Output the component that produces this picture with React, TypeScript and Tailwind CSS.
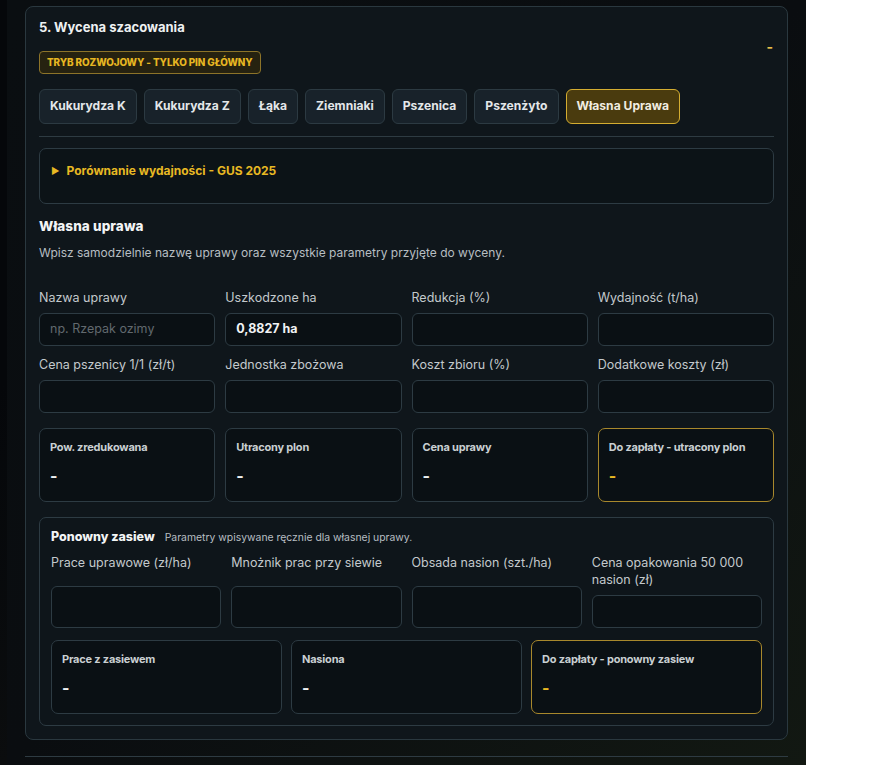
import React from 'react';

const crops = ['Kukurydza K', 'Kukurydza Z', 'Łąka', 'Ziemniaki', 'Pszenica', 'Pszenżyto', 'Własna Uprawa'];

const Field: React.FC<{ label: string; value?: string; placeholder?: string }> = ({ label, value, placeholder }) => (
  <div className="flex flex-col">
    <label className="text-[12.5px] leading-[17px] text-[#c3c9cc] mb-[7px]">{label}</label>
    <div className="h-[33px] rounded-[6px] border border-[#2d3b43] bg-[#0a1014] px-[10px] flex items-center text-[12.5px]">
      {value ? (
        <span className="font-bold text-[#f1f3f4]">{value}</span>
      ) : (
        <span className="text-[#61696e]">{placeholder}</span>
      )}
    </div>
  </div>
);

const Stat: React.FC<{ label: string; accent?: boolean }> = ({ label, accent }) => (
  <div
    className={`h-[74px] rounded-[7px] border bg-[#0a1014] px-[10px] pt-[11px] flex flex-col ${
      accent ? 'border-[#a8882c]' : 'border-[#2d3b43]'
    }`}
  >
    <span className="text-[11px] leading-[15px] font-bold text-[#c9cfd2] tracking-[-0.2px]">{label}</span>
    <span className={`mt-[11px] text-[16px] leading-[20px] font-bold ${accent ? 'text-[#e8b923]' : 'text-[#eef1f2]'}`}>-</span>
  </div>
);

export default function App() {
  return (
    <div className="flex w-[887px] h-[765px] overflow-hidden bg-white font-['Inter',sans-serif]">
      <div className="w-[7px] bg-gradient-to-b from-[#05070a] via-[#05070a] to-[#0b0d0e]" />
      <div className="w-[799px] px-[18px] pt-[6px] bg-gradient-to-br from-[#0a0e11] via-[#0a0d10] to-[#121812]">
        <section className="rounded-[8px] border border-[#2a383f] bg-[#0f161b] px-[13px] pt-[11px] pb-[13px]">
          {/* header */}
          <div className="flex items-center justify-between">
            <div className="flex flex-col items-start">
              <h2 className="text-[13px] leading-[18px] font-bold text-[#eef1f2]">5. Wycena szacowania</h2>
              <span className="mt-[15px] h-[23px] flex items-center px-[7px] rounded-[4px] border border-[#8d7429] bg-[#262210] text-[9.9px] font-extrabold tracking-[-0.1px] text-[#e6b622]">
                TRYB ROZWOJOWY - TYLKO PIN GŁÓWNY
              </span>
            </div>
            <span className="text-[#e8c04a] font-bold text-[14px] mr-[1px]">-</span>
          </div>

          {/* crop tabs */}
          <div className="mt-[15px] flex gap-[7px]">
            {crops.map((c) => {
              const active = c === 'Własna Uprawa';
              return (
                <button
                  key={c}
                  className={`h-[35px] px-[10px] rounded-[6px] border text-[12.1px] font-bold ${
                    active ? 'bg-[#4a3b0e] border-[#d4ad31] text-[#f1ede0]' : 'bg-[#18222a] border-[#2c3a42] text-[#e3e7e9]'
                  }`}
                >
                  {c}
                </button>
              );
            })}
          </div>

          <div className="mt-[12px] border-t border-[#2e3b42]" />

          <div className="mt-[11px] h-[56px] rounded-[7px] border border-[#2d3b43] bg-[#0c1317] px-[11px] pt-[13px]">
            <div className="flex items-center gap-[7px] text-[12px] font-bold text-[#e8b923]">
              <span className="text-[9px]">▶</span>
              <span>Porównanie wydajności - GUS 2025</span>
            </div>
          </div>

          {/* custom crop */}
          <h3 className="mt-[13px] text-[13.5px] leading-[18px] font-extrabold text-[#f2f4f5] tracking-[0.1px]">Własna uprawa</h3>
          <p className="mt-[9px] text-[12px] leading-[17px] text-[#b7bec2]">
            Wpisz samodzielnie nazwę uprawy oraz wszystkie parametry przyjęte do wyceny.
          </p>

          <div className="mt-[28px] grid grid-cols-4 gap-x-[10px] gap-y-[10px]">
            <Field label="Nazwa uprawy" placeholder="np. Rzepak ozimy" />
            <Field label="Uszkodzone ha" value="0,8827 ha" />
            <Field label="Redukcja (%)" />
            <Field label="Wydajność (t/ha)" />
            <Field label="Cena pszenicy 1/1 (zł/t)" />
            <Field label="Jednostka zbożowa" />
            <Field label="Koszt zbioru (%)" />
            <Field label="Dodatkowe koszty (zł)" />
          </div>

          <div className="mt-[15px] grid grid-cols-4 gap-[10px]">
            <Stat label="Pow. zredukowana" />
            <Stat label="Utracony plon" />
            <Stat label="Cena uprawy" />
            <Stat label="Do zapłaty - utracony plon" accent />
          </div>

          {/* reseeding */}
          <div className="mt-[15px] rounded-[7px] border border-[#2d3b43] bg-[#0e151a] px-[11px] pt-[10px] pb-[11px]">
            <div className="flex items-baseline gap-[10px]">
              <span className="text-[12.5px] font-extrabold text-[#f2f4f5]">Ponowny zasiew</span>
              <span className="text-[10.4px] text-[#b7bec2]">Parametry wpisywane ręcznie dla własnej uprawy.</span>
            </div>
            <div className="mt-[7px] grid grid-cols-4 gap-x-[10px]">
              {[
                ['Prace uprawowe (zł/ha)', 'h-[42px]'],
                ['Mnożnik prac przy siewie', 'h-[42px]'],
                ['Obsada nasion (szt./ha)', 'h-[42px]'],
                ['Cena opakowania 50 000 nasion (zł)', 'h-[33px]'],
              ].map(([label, h]) => (
                <div key={label} className="flex flex-col justify-between gap-[7px]">
                  <label className="text-[12.5px] leading-[17px] text-[#c3c9cc]">{label}</label>
                  <div className={`${h} rounded-[6px] border border-[#2d3b43] bg-[#0a1014]`} />
                </div>
              ))}
            </div>
            <div className="mt-[12px] grid grid-cols-3 gap-[9px]">
              <Stat label="Prace z zasiewem" />
              <Stat label="Nasiona" />
              <Stat label="Do zapłaty - ponowny zasiew" accent />
            </div>
          </div>
        </section>
        <div className="mt-[16px] border-t border-[#2e3b42]" />
      </div>
    </div>
  );
}
